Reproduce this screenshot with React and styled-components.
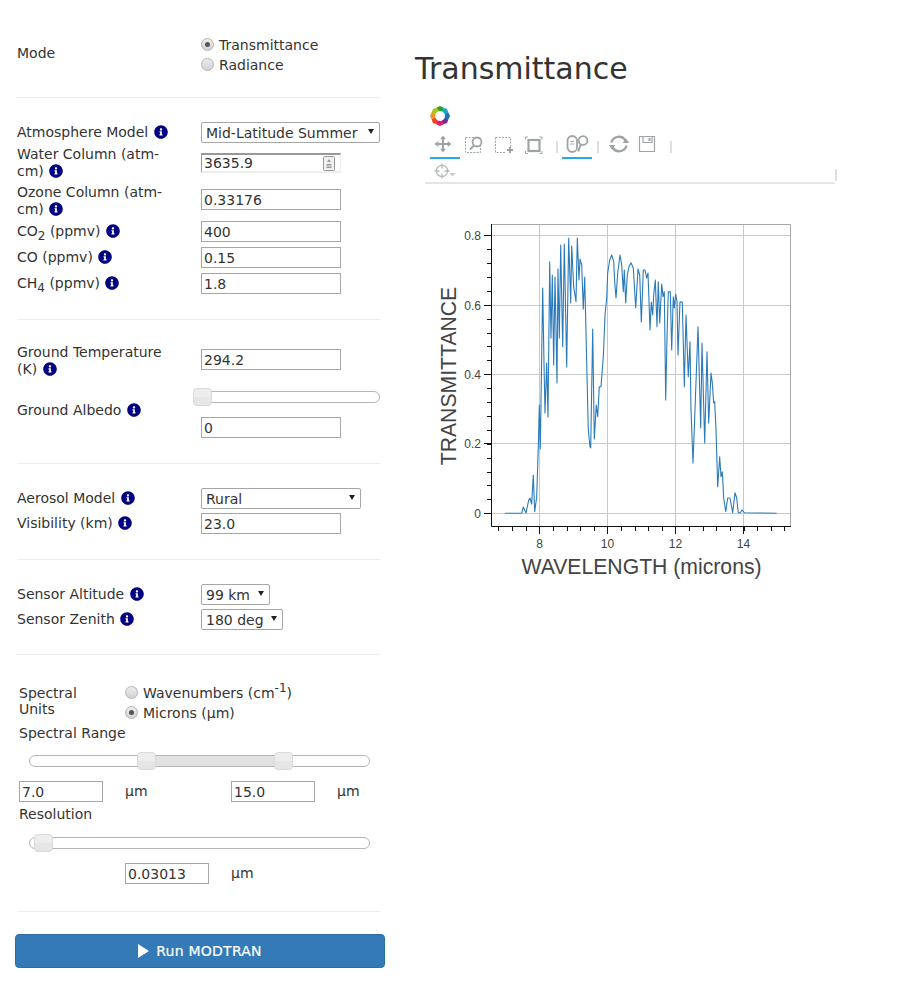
import React from 'react';
import styled, { createGlobalStyle } from 'styled-components';
import { FaInfoCircle } from 'react-icons/fa';

const Global = createGlobalStyle`
  html, body { margin: 0; padding: 0; background: #fff; }
  body { font-family: "DejaVu Sans", Verdana, sans-serif; font-size: 14px; line-height: 17px; color: #333; }
`;

const Page = styled.div`
  display: flex;
  align-items: flex-start;
  width: 912px;
  height: 993px;
  overflow: hidden;
`;
const Panel = styled.form`
  width: 370px;
  margin-left: 15px;
  flex: none;
`;
const Section = styled.section`
  margin: 0 5px 0 2px;
  padding: ${p => p.$top ?? 24}px 0 ${p => p.$bottom ?? 24}px;
  border-bottom: 1px solid #eee;
  display: flex;
  flex-direction: column;
`;
const Row = styled.div`
  display: grid;
  grid-template-columns: 184px 1fr;
  align-items: center;
  min-height: 21px;
  margin-top: ${p => p.$mt ?? 0}px;
  & > :last-child {
    align-self: ${p => (p.$ctl != null ? 'start' : 'center')};
    margin-top: ${p => p.$ctl ?? 0}px;
  }
`;
const Label = styled.label`
  display: block;
  width: 152px;
  sub, sup { font-size: 12px; line-height: 0; }
`;
const ModeLabel = styled(Label)`
  margin-bottom: 4px;
`;
const InfoIcon = styled(FaInfoCircle)`
  color: #000080;
  font-size: 14px;
  vertical-align: -2px;
  margin-left: 1px;
`;
const Info = () => <InfoIcon />;

const TextInput = styled.input`
  box-sizing: border-box;
  display: block;
  width: ${p => p.$w ?? 140}px;
  height: 21px;
  padding: 1px 2px;
  border: 1px solid #a6a6a6;
  border-radius: 0;
  background: #fff;
  color: #333;
  font: 14px "DejaVu Sans", Verdana, sans-serif;
  outline: none;
`;
const NumberWrap = styled.div`
  position: relative;
  width: 140px;
  height: 20px;
`;
const InsetInput = styled(TextInput)`
  height: 20px;
  border-width: 2px 1px 2px 1px;
  border-color: #999 #eee #eee #999;
  padding: 0 2px;
`;
const Spinner = styled.svg`
  position: absolute;
  right: 6px;
  top: 3px;
`;
const SelectWrap = styled.div`
  position: relative;
  width: ${p => p.$w}px;
  &::after {
    content: '';
    position: absolute;
    right: ${p => p.$caret ?? 6}px;
    top: 7px;
    border-left: 3px solid transparent;
    border-right: 3px solid transparent;
    border-top: 5px solid #222;
  }
`;
const Select = styled.select`
  box-sizing: border-box;
  appearance: none;
  display: block;
  width: 100%;
  height: 21px;
  padding: 0 4px;
  background: #fff;
  border: 1px solid #a6a6a6;
  border-radius: 2px;
  color: #333;
  font: 14px "DejaVu Sans", Verdana, sans-serif;
  outline: none;
`;
const RadioGroup = styled.div`
  display: flex;
  flex-direction: column;
  gap: 3px;
`;
const RadioLine = styled.label`
  display: flex;
  align-items: center;
  gap: 5px;
  sup { font-size: 12px; line-height: 0; }
`;
const Radio = styled.input.attrs({ type: 'radio' })`
  appearance: none;
  box-sizing: border-box;
  width: 13px;
  height: 13px;
  margin: -3px 0 0 0;
  border: 1px solid #b4b4b4;
  border-radius: 50%;
  background: linear-gradient(#ececec, #d2d2d2);
  display: grid;
  place-items: center;
  &:checked::before {
    content: '';
    width: 5px;
    height: 5px;
    border-radius: 50%;
    background: #555;
  }
`;
const ControlStack = styled.div`
  display: flex;
  flex-direction: column;
`;
const Slider = styled.div`
  position: relative;
  box-sizing: border-box;
  height: 12px;
  width: ${p => p.$w}px;
  border: 1px solid #b5b5b5;
  border-radius: 6px;
  background: #fff;
`;
const SliderFill = styled.div`
  position: absolute;
  top: 0;
  bottom: 0;
  background: #e2e2e2;
`;
const Handle = styled.div`
  position: absolute;
  box-sizing: border-box;
  top: -4px;
  width: 19px;
  height: 18px;
  border: 1px solid #d9d9d9;
  border-radius: 4px;
  background: linear-gradient(#ededed 50%, #e6e6e6 50%);
`;
const AlbedoRow = styled(Row)`
  align-items: start;
`;
const AlbedoLabel = styled(Label)`
  margin-top: 14px;
`;
const SlideBox = styled.div`
  height: 12px;
  margin: 3px 0 14px;
`;
const Spectral = styled(Section)`
  padding-left: 2px;
`;
const UnitsRow = styled.div`
  display: flex;
  align-items: flex-start;
`;
const UnitsLabel = styled.label`
  box-sizing: border-box;
  width: 106px;
  padding-right: 24px;
  line-height: 16px;
  flex: none;
`;
const PlainLabel = styled.label`
  display: block;
  margin-top: ${p => p.$mt ?? 0}px;
`;
const RangeTrack = styled.div`
  padding-left: 10px;
  margin: ${p => p.$m};
`;
const ValuesRow = styled.div`
  display: flex;
  align-items: center;
  padding-left: ${p => p.$pl ?? 0}px;
`;
const Unit = styled.span`
  margin-left: 22px;
  width: ${p => p.$w ?? 'auto'};
`;
const RunWrap = styled.div`
  padding-top: 22px;
`;
const RunButton = styled.button`
  box-sizing: border-box;
  display: flex;
  align-items: center;
  justify-content: center;
  gap: 7px;
  width: 370px;
  height: 34px;
  border: 1px solid #2e6da4;
  border-radius: 4px;
  background: #337ab7;
  color: #fff;
  font: 500 14px "DejaVu Sans", Verdana, sans-serif;
  letter-spacing: 0.25px;
  -webkit-text-stroke: 0.2px #fff;
`;
const Play = styled.svg`
  display: block;
`;

const Right = styled.main`
  margin-left: 30px;
  padding-top: 52px;
  flex: none;
  width: 470px;
`;
const Title = styled.h1`
  margin: 0;
  font-size: 30px;
  line-height: 34px;
  font-weight: 400;
  color: #333;
`;
const Toolbar = styled.div`
  position: relative;
  box-sizing: border-box;
  width: 410px;
  margin: 20px 0 0 10px;
  border-bottom: 2px solid #e5e5e5;
  height: 78px;
  padding-left: 5px;
`;
const ToolRow = styled.div`
  display: flex;
  align-items: flex-start;
  height: 31px;
  margin-top: 5px;
`;
const Logo = styled.svg`
  display: block;
`;
const Tool = styled.div`
  box-sizing: border-box;
  width: ${p => p.$w ?? 30}px;
  height: 28px;
  display: flex;
  align-items: center;
  justify-content: center;
  padding-right: ${p => p.$pad ?? 0}px;
  border-bottom: 2px solid ${p => (p.$active ? '#26aae1' : 'transparent')};
  flex: none;
`;
const Sep = styled.div`
  width: 2px;
  height: 12px;
  margin: 10px ${p => p.$r ?? 4}px 0 ${p => p.$l ?? 6}px;
  background: #e5dcdc;
  flex: none;
`;
const Cross = styled.svg`
  display: block;
  margin-left: 2px;
`;
const EndTick = styled.div`
  position: absolute;
  right: -2px;
  bottom: 1px;
  width: 2px;
  height: 12px;
  background: #e5dcdc;
`;
const ChartSvg = styled.svg`
  display: block;
  margin: 31px 0 0 15px;
`;

const ICON = '#9ea4a6';

const PETALS = ['#2ca02c', '#1fa6c9', '#1f77b4', '#7b2d8e', '#e6196e', '#f0402a', '#f7941d', '#a6c81e'];
const BokehLogo = () => (
  <Logo width="20" height="20" viewBox="0 0 20 20">
    {PETALS.map((c, i) => (
      <path key={c} d="M6.6 1.6 L10 0 L13.4 1.6 L13 5.6 L8 4.8 Z" fill={c} transform={`rotate(${i * 45} 10 10)`} />
    ))}
    <circle cx="10" cy="10" r="4" fill="#fff" />
  </Logo>
);

const PanIcon = () => (
  <svg width="20" height="20" viewBox="0 0 20 20" fill={ICON}>
    <path d="M9 5h2v4h4v2h-4v4H9v-4H5V9h4z" />
    <path d="M10 1.5l3 3.8H7zM10 18.5l-3-3.8h6zM1.5 10l3.8-3v6zM18.5 10l-3.8 3V7z" />
  </svg>
);
const BoxZoomIcon = () => (
  <svg width="20" height="20" viewBox="0 0 20 20" fill="none" stroke={ICON}>
    <rect x="2.5" y="3.5" width="15" height="15" strokeDasharray="2 1.2" />
    <circle cx="14" cy="8" r="4.5" strokeWidth="1.8" fill="#fff" />
    <path d="M11 11.5l-4 4" strokeWidth="2" />
  </svg>
);
const BoxSelectIcon = () => (
  <svg width="20" height="20" viewBox="0 0 20 20" fill="none" stroke={ICON}>
    <path d="M2.5 3.5h15v9M12 18.5H2.500v-15" strokeDasharray="2 1.2" />
    <path d="M17 13v6M14 16h6" strokeWidth="2" />
  </svg>
);
const ResizeIcon = () => (
  <svg width="20" height="20" viewBox="0 0 20 20" fill="none" stroke={ICON}>
    <rect x="5.5" y="6" width="11" height="11" strokeWidth="2.2" />
    <path d="M2.5 5.500v-2.500H5M16.500 3h2.500v2.500M19 17v2.500h-2.500M5 19.500H2.500V17" />
  </svg>
);
const WheelIcon = () => (
  <svg width="30" height="20" viewBox="0 0 30 20" fill="none" stroke={ICON}>
    <rect x="5.5" y="2" width="9.5" height="16" rx="4.75" strokeWidth="1.8" />
    <path d="M8.5 7.5h3.500M8.500 10h3.500" strokeWidth="1.2" />
    <circle cx="21" cy="6.5" r="4.4" strokeWidth="1.8" />
    <path d="M18.7 10.5l-2.500 7" strokeWidth="2" />
  </svg>
);
const ResetIcon = () => (
  <svg width="22" height="20" viewBox="0 0 22 20" fill="none" stroke={ICON} strokeWidth="2.4">
    <path d="M3.4 8.5A7.8 7.8 0 0 1 17.5 6.5" />
    <path d="M18.6 11.5A7.8 7.8 0 0 1 4.5 13.5" />
    <path d="M14.6 9h6.600L18 4.600zM.8 11h6.600L4 15.600z" fill={ICON} stroke="none" />
  </svg>
);
const SaveIcon = () => (
  <svg width="18" height="18" viewBox="0 0 18 18" fill="none" stroke={ICON} strokeWidth="1.2">
    <path d="M1.5 1.5h15v15h-15z" />
    <path d="M5 1.5v6h9v-6" />
    <path d="M10.5 3h2v3h-2z" fill={ICON} stroke="none" />
  </svg>
);

const DATA = [
  [505, 513.3], [521.7, 513.3], [523.3, 507], [526, 513], [528.7, 500], [530, 498], [531.7, 504], [533.3, 475],
  [534.7, 511.7], [536.7, 496.7], [538.3, 446.7], [539.3, 405], [540.3, 449], [542.7, 288], [544, 363], [545, 413],
  [546.7, 363], [548, 417], [549.7, 261.7], [551, 338], [552.3, 275], [553.7, 365], [555, 277], [557, 383], [558, 269],
  [559.3, 338], [560.7, 245], [562.7, 346.7], [564.3, 244], [566.7, 367], [568.7, 238], [570.7, 303], [571.7, 246],
  [573.7, 287], [576, 301.7], [577.3, 238], [579, 280], [580, 259], [581.7, 265], [583.3, 309], [584.7, 277], [586.7, 363],
  [588.3, 430], [590, 446.7], [590.7, 448], [592.7, 329], [594.3, 439], [596.3, 405], [597.7, 416.7], [599.3, 386.7],
  [601, 386.7], [603.3, 356.7], [605, 315], [606.7, 298], [607.7, 273], [609.7, 260], [611.7, 255], [613.7, 261.7],
  [614.7, 281.7], [616, 298], [617.7, 273], [620, 255], [621.7, 265], [623.3, 291.7], [624.3, 270], [625.7, 303], [627.3, 275],
  [629, 266.7], [631, 262.7], [633.3, 268], [635.7, 308], [638, 269], [639.7, 275], [641.3, 322], [643.3, 270], [645, 270],
  [646.7, 278], [648, 273], [650, 330], [651.3, 302], [652.7, 315], [653.7, 295], [655.3, 280], [657, 326.7], [658.3, 281.7],
  [659.7, 323], [661.7, 284], [663, 296.7], [664.3, 291.7], [665.7, 400], [667, 338], [668.3, 291.7], [670.3, 291.7],
  [671.7, 350], [673.3, 296.7], [674.3, 308], [675.7, 294], [677, 301.7], [678, 355], [680, 301.7], [682.3, 302],
  [684.3, 386.7], [686, 315], [688.3, 376.7], [690, 341.7], [691, 410], [693, 463], [695, 410], [698, 326.7], [700.7, 428],
  [702, 343], [704.7, 443], [707, 351.7], [708.7, 423], [711, 373], [712.3, 383], [713.7, 403], [714.7, 401.7], [716, 430],
  [717.7, 486.7], [719.7, 456.7], [721, 476.7], [722.3, 471.7], [723.7, 498], [725.7, 511.7], [727.7, 498], [730, 498],
  [732.7, 512.7], [735, 492.7], [736.7, 498], [738.3, 512.7], [740.3, 512.7], [742, 510], [744.3, 512.7], [776.7, 513.3],
];

const X_GRID = [539.5, 607.5, 675.5, 743.5];
const Y_GRID = [235.5, 305.5, 374.5, 443.5, 513.5];
const X_LABELS = ['8', '10', '12', '14'];
const Y_LABELS = ['0.8', '0.6', '0.4', '0.2', '0'];
const xMinor = Array.from({ length: 22 }, (_, i) => 498.4 + i * 13.62);
const yMinor = Array.from({ length: 21 }, (_, i) => 513.3 - i * 13.9);

const Chart = () => (
  <ChartSvg width="370" height="370" viewBox="430 215 370 370">
    {X_GRID.map(x => <path key={x} d={`M${x} 224.5V526.5`} stroke="#c8c8c8" />)}
    {Y_GRID.map(y => <path key={y} d={`M492 ${y}H790`} stroke="#c8c8c8" />)}
    <path d="M491.5 224.5H790.5V526.5" fill="none" stroke="#a8a8a8" />
    <polyline points={DATA.map(d => d.join(',')).join(' ')} fill="none" stroke="#2b7bba" strokeWidth="1.1" strokeLinejoin="round" />
    <path d="M491.5 224V526.5H791" fill="none" stroke="#111" />
    {xMinor.map(x => <path key={x} d={`M${Math.round(x) + 0.5} 527v4`} stroke="#111" />)}
    {X_GRID.map(x => <path key={x} d={`M${x} 527v7`} stroke="#111" />)}
    {yMinor.map(y => <path key={y} d={`M491 ${Math.round(y) + 0.5}h-4`} stroke="#111" />)}
    {Y_GRID.map(y => <path key={y} d={`M491 ${y}h-7`} stroke="#111" />)}
    <g fontFamily="'Liberation Sans', Arial, sans-serif" fontSize="12" fill="#444">
      {X_LABELS.map((t, i) => <text key={t} x={X_GRID[i]} y="548" textAnchor="middle">{t}</text>)}
      {Y_LABELS.map((t, i) => <text key={t} x="481" y={Y_GRID[i] + 4} textAnchor="end">{t}</text>)}
    </g>
    <g fontFamily="'Liberation Sans', Arial, sans-serif" fontSize="21.2" fill="#444">
      <text x="641.5" y="574" textAnchor="middle">WAVELENGTH (microns)</text>
      <text transform="translate(456 376) rotate(-90)" textAnchor="middle">TRANSMITTANCE</text>
    </g>
  </ChartSvg>
);

export default function App() {
  return (
    <Page>
      <Global />
      <Panel>
        <Section $top={37} $bottom={23}>
          <Row>
            <ModeLabel>Mode</ModeLabel>
            <RadioGroup>
              <RadioLine><Radio name="mode" defaultChecked /><span>Transmittance</span></RadioLine>
              <RadioLine><Radio name="mode" /><span>Radiance</span></RadioLine>
            </RadioGroup>
          </Row>
        </Section>
        <Section $bottom={25}>
          <Row>
            <Label>Atmosphere Model <Info /></Label>
            <SelectWrap $w={179}>
              <Select defaultValue="mls"><option value="mls">Mid-Latitude Summer</option></Select>
            </SelectWrap>
          </Row>
          <Row $mt={3} $ctl={7}>
            <Label>Water Column (atm-cm) <Info /></Label>
            <NumberWrap>
              <InsetInput defaultValue="3635.9" />
              <Spinner width="12" height="15" viewBox="0 0 12 15">
                <rect x="0.5" y="0.5" width="11" height="14" rx="1" fill="#f0f0f0" stroke="#999" />
                <path d="M6 3l2 3H4zM3.5 8h5v1.5h-5zM3.5 10.5h5V12h-5z" fill="#999" />
              </Spinner>
            </NumberWrap>
          </Row>
          <Row $mt={4} $ctl={5}>
            <Label>Ozone Column (atm-cm) <Info /></Label>
            <TextInput defaultValue="0.33176" />
          </Row>
          <Row $mt={3}>
            <Label>CO<sub>2</sub> (ppmv) <Info /></Label>
            <TextInput defaultValue="400" />
          </Row>
          <Row $mt={5}>
            <Label>CO (ppmv) <Info /></Label>
            <TextInput defaultValue="0.15" />
          </Row>
          <Row $mt={5}>
            <Label>CH<sub>4</sub> (ppmv) <Info /></Label>
            <TextInput defaultValue="1.8" />
          </Row>
        </Section>
        <Section $bottom={25}>
          <Row $ctl={5}>
            <Label>Ground Temperature (K) <Info /></Label>
            <TextInput defaultValue="294.2" />
          </Row>
          <AlbedoRow $mt={10}>
            <AlbedoLabel>Ground Albedo <Info /></AlbedoLabel>
            <ControlStack>
              <SlideBox>
                <Slider $w={179}><Handle style={{ left: -9 }} /></Slider>
              </SlideBox>
              <TextInput defaultValue="0" />
            </ControlStack>
          </AlbedoRow>
        </Section>
        <Section $bottom={25}>
          <Row>
            <Label>Aerosol Model <Info /></Label>
            <SelectWrap $w={160}>
              <Select defaultValue="rural"><option value="rural">Rural</option></Select>
            </SelectWrap>
          </Row>
          <Row $mt={4}>
            <Label>Visibility (km) <Info /></Label>
            <TextInput defaultValue="23.0" />
          </Row>
        </Section>
        <Section>
          <Row>
            <Label>Sensor Altitude <Info /></Label>
            <SelectWrap $w={69}>
              <Select defaultValue="99"><option value="99">99 km</option></Select>
            </SelectWrap>
          </Row>
          <Row $mt={4}>
            <Label>Sensor Zenith <Info /></Label>
            <SelectWrap $w={82}>
              <Select defaultValue="180"><option value="180">180 deg</option></Select>
            </SelectWrap>
          </Row>
        </Section>
        <Spectral $top={30} $bottom={27}>
          <UnitsRow>
            <UnitsLabel>Spectral Units</UnitsLabel>
            <RadioGroup>
              <RadioLine><Radio name="units" /><span>Wavenumbers (cm<sup>-1</sup>)</span></RadioLine>
              <RadioLine><Radio name="units" defaultChecked /><span>Microns (µm)</span></RadioLine>
            </RadioGroup>
          </UnitsRow>
          <PlainLabel $mt={3}>Spectral Range</PlainLabel>
          <RangeTrack $m="13px 0 14px">
            <Slider $w={341}>
              <SliderFill style={{ left: 117, width: 137 }} />
              <Handle style={{ left: 107 }} />
              <Handle style={{ left: 244 }} />
            </Slider>
          </RangeTrack>
          <ValuesRow>
            <TextInput $w={84} defaultValue="7.0" />
            <Unit $w="106px">µm</Unit>
            <TextInput $w={84} defaultValue="15.0" />
            <Unit>µm</Unit>
          </ValuesRow>
          <PlainLabel $mt={4}>Resolution</PlainLabel>
          <RangeTrack $m="14px 0 14px">
            <Slider $w={341}><Handle style={{ left: 4 }} /></Slider>
          </RangeTrack>
          <ValuesRow $pl={106}>
            <TextInput $w={84} defaultValue="0.03013" />
            <Unit>µm</Unit>
          </ValuesRow>
        </Spectral>
        <RunWrap>
          <RunButton type="button">
            <Play width="11" height="14" viewBox="0 0 11 14"><path d="M0 0l11 7-11 7z" fill="#fff" /></Play>
            Run MODTRAN
          </RunButton>
        </RunWrap>
      </Panel>
      <Right>
        <Title>Transmittance</Title>
        <Toolbar>
          <BokehLogo />
          <ToolRow>
            <Tool $active $pad={4}><PanIcon /></Tool>
            <Tool $pad={4}><BoxZoomIcon /></Tool>
            <Tool $pad={4}><BoxSelectIcon /></Tool>
            <Tool $pad={4}><ResizeIcon /></Tool>
            <Sep />
            <Tool $active><WheelIcon /></Tool>
            <Sep $l={5} $r={6} />
            <Tool $w={28}><ResetIcon /></Tool>
            <Tool $w={28}><SaveIcon /></Tool>
            <Sep $l={9} />
          </ToolRow>
          <Cross width="26" height="18" viewBox="0 0 26 18" fill="none" stroke="#b5babc" strokeWidth="1.3">
            <circle cx="10" cy="9" r="5.6" />
            <path d="M10 1.5v5M10 11.5v5M2.5 9h5M12.5 9h5" />
            <path d="M17 11h7l-3.5 3.5z" fill="#ccc" stroke="none" />
          </Cross>
          <EndTick />
        </Toolbar>
        <Chart />
      </Right>
    </Page>
  );
}
